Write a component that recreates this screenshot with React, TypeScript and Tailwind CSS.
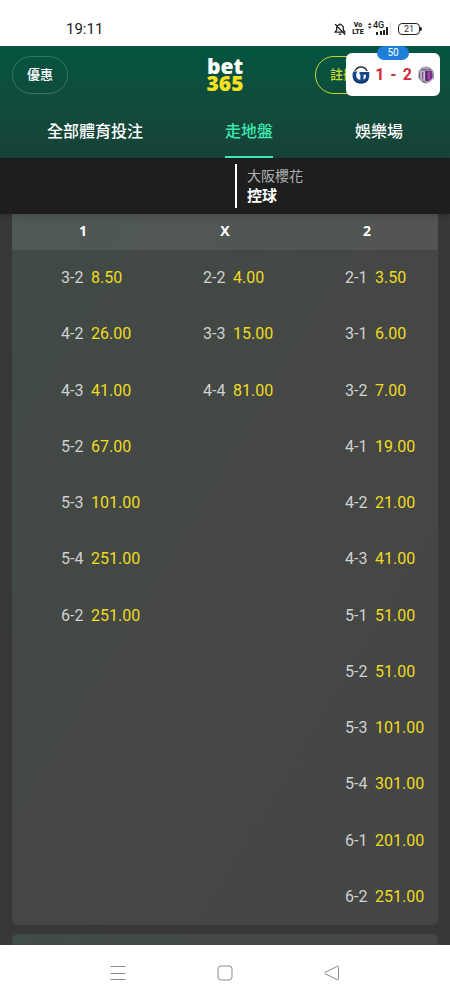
import React from 'react';

interface Selection {
  score: string;
  odds: string;
}

interface Column {
  title: string;
  selections: Selection[];
}

const columns: Column[] = [
  {
    title: '1',
    selections: [
      { score: '3-2', odds: '8.50' },
      { score: '4-2', odds: '26.00' },
      { score: '4-3', odds: '41.00' },
      { score: '5-2', odds: '67.00' },
      { score: '5-3', odds: '101.00' },
      { score: '5-4', odds: '251.00' },
      { score: '6-2', odds: '251.00' },
    ],
  },
  {
    title: 'X',
    selections: [
      { score: '2-2', odds: '4.00' },
      { score: '3-3', odds: '15.00' },
      { score: '4-4', odds: '81.00' },
    ],
  },
  {
    title: '2',
    selections: [
      { score: '2-1', odds: '3.50' },
      { score: '3-1', odds: '6.00' },
      { score: '3-2', odds: '7.00' },
      { score: '4-1', odds: '19.00' },
      { score: '4-2', odds: '21.00' },
      { score: '4-3', odds: '41.00' },
      { score: '5-1', odds: '51.00' },
      { score: '5-2', odds: '51.00' },
      { score: '5-3', odds: '101.00' },
      { score: '5-4', odds: '301.00' },
      { score: '6-1', odds: '201.00' },
      { score: '6-2', odds: '251.00' },
    ],
  },
];

const tabs = ['全部體育投注', '走地盤', '娛樂場'];

const BellOffIcon = () => (
  <svg className="w-3 h-3" viewBox="0 0 12 12" fill="none" stroke="#222" strokeWidth="1.3" strokeLinecap="round" strokeLinejoin="round">
    <path d="M1 9.200h10L9.400 7.200V5a3.400 3.400 0 0 0-6.800 0v2.200L1 9.200M6 1.500V.8M5.200 11.200h1.600M1.400 1.400l9.400 9.800" />
  </svg>
);

const BatteryIcon = () => (
  <div className="flex items-center">
    <div className="w-[22px] h-3 rounded border border-[#222] flex items-center justify-center text-[9px] leading-none text-[#333]">21</div>
    <div className="w-0.5 h-1 rounded-r bg-[#222]" />
  </div>
);

const StatusBar = () => (
  <div className="h-[46px] bg-white flex items-center justify-between pl-[66px] pr-7 pt-3 text-[#222]">
    <span className="text-[15px] leading-5">19:11</span>
    <div className="flex items-center">
      <BellOffIcon />
      {/* VoLTE */}
      <div className="ml-1.5 w-3 flex flex-col items-center text-[7px] leading-[7px] font-black">
        <span>Vo</span>
        <span>LTE</span>
      </div>
      {/* 4G signal */}
      <div className="relative ml-1 w-6 h-3.5">
        <svg className="w-6 h-3.5" viewBox="0 0 24 14" fill="#222">
          <path d="M0 3l1.800-2.200L3.600 3zM0 4.600h3.600L1.800 6.800z" />
          <rect x="8" y="10" width="2" height="3" />
          <rect x="12" y="9" width="2" height="4" />
          <rect x="15" y="8" width="2" height="5" />
          <rect x="18" y="5" width="2" height="8" />
          <rect x="22" y="0" width="1" height="13" fill="#ddd" />
        </svg>
        <span className="absolute left-[5px] -top-px text-[9px] leading-[9px] font-medium">4G</span>
      </div>
      <div className="ml-1.5">
        <BatteryIcon />
      </div>
    </div>
  </div>
);

const GambaCrest = () => (
  <svg className="w-[18px] h-[18px] shrink-0" viewBox="0 0 18 18" fill="none">
    <path d="M2.800 5C4.200 2.400 6.400 1 9 1s4.800 1.400 6.200 4" stroke="#2a2f3c" strokeWidth="1.400" />
    <path d="M1.200 5.500H5.500C4.600 6.600 4.200 7.800 4.200 9.200c0 2.800 1.700 4.600 4.200 4.600V8.500H7.500V6H17.300v3.500c0 4.700-3.400 8-8.300 8S.5 14 .5 9.500c0-1.500.2-2.800.7-4Z" fill="#17468a" />
    <path d="M11.500 8.800h2.400v1.500c0 1.600-.9 2.800-2.400 3.300Z" fill="#fff" />
    <path d="M2 13c1.500 2.700 3.900 4 7 4s5.500-1.300 7-4" stroke="#142c58" strokeWidth="1.200" />
  </svg>
);

const CerezoCrest = () => (
  <svg className="w-[18px] h-[18px] shrink-0" viewBox="0 0 18 18">
    <path d="M5 1.200 9 .3l4 .9L16.600 5v7.500L13 16l-4 1.700L5 16l-3.600-3.500V5Z" fill="#aaa3b5" />
    <path d="M4 5.500h5v9.800L4 12.800Z" fill="#c9bfd2" />
    <path d="M9 5h6v7.500l-4 3-2-1Z" fill="#7e2d8c" />
    <path d="M5.600 6v7.500" stroke="#8a3f96" strokeWidth="1.400" />
    <path d="M8.900 5v10" stroke="#43275d" strokeWidth="1.400" />
    <path d="M12 6v7" stroke="#b56cbe" strokeWidth="1" />
    <path d="M4 3.800h10M2.400 7v5M16 7v5M5 15.200l3.500 1.500" stroke="#625b74" strokeWidth="1" />
  </svg>
);

const ScoreWidget = () => (
  <div className="absolute right-2.5 top-[53px] w-[94px] h-[43px] rounded-md bg-white flex items-center justify-between pl-1.5 pr-[5px]">
    <span className="absolute -top-[7px] left-[31px] w-8 h-3.5 rounded-full bg-[#1e7fd9] text-white text-[10px] leading-[14px] text-center">50</span>
    <GambaCrest />
    <div className="flex gap-1.5 text-base font-bold text-[#d02c3e]">
      <span>1</span>
      <span>-</span>
      <span>2</span>
    </div>
    <CerezoCrest />
  </div>
);

const Header = () => (
  <header className="h-28 bg-linear-to-b from-[#025641] to-[#174137] flex flex-col justify-between">
    <div className="grid grid-cols-3 items-center px-3 h-[57px]">
      <button className="justify-self-start w-14 h-[38px] rounded-full border border-[#39765f] text-white text-[13px] font-medium">優惠</button>
      <a href="#" className="justify-self-center flex flex-col items-center font-['Open_Sans'] text-[21px] leading-[17px] font-extrabold text-white">
        <span>bet</span>
        <span className="text-[#fbe020]">365</span>
      </a>
      <button className="justify-self-end mr-[67px] w-14 h-[38px] rounded-full border border-[#c6d82e] text-[#c6d82e] text-[13px] font-medium">註冊</button>
    </div>
    <nav className="flex justify-between px-[47px]">
      {tabs.map((tab) => (
        <a
          key={tab}
          href="#"
          className={`h-[54px] border-b-2 pt-1 text-base leading-[48px] font-medium ${tab === '走地盤' ? 'text-[#3be8b0] border-[#3be8b0]' : 'text-white border-transparent'}`}
        >
          {tab}
        </a>
      ))}
    </nav>
  </header>
);

const TeamBar = () => (
  <div className="h-14 bg-[#1e1e1e] shadow-md relative flex items-center pl-[235px]">
    <div className="h-11 border-l-2 border-white pl-2.5 flex flex-col justify-center">
      <span className="text-sm leading-5 text-[#b0b0b0]">大阪櫻花</span>
      <span className="text-[15px] leading-5 font-bold text-white">控球</span>
    </div>
  </div>
);

const Market = () => (
  <section className="mx-3 grid grid-cols-3 rounded-b-md overflow-hidden bg-linear-to-br from-[#404a46] via-[#454745] to-[#444545]">
    {columns.map((column) => (
      <div key={column.title}>
        <h2 className="h-9 bg-white/8 text-center text-sm leading-[34px] font-bold font-['Open_Sans'] text-white">{column.title}</h2>
        <div className="grid grid-rows-12 h-[675px]">
          {column.selections.map((item) => (
            <button key={item.score} className="flex items-center pl-[49px] text-base">
              <span className="w-[30px] shrink-0 text-left text-[#d0d2d1]">{item.score}</span>
              <span className="text-[#efdc1e]">{item.odds}</span>
            </button>
          ))}
        </div>
      </div>
    ))}
  </section>
);

const NavigationBar = () => (
  <footer className="h-[55px] bg-white grid grid-cols-[1fr_107px_107px_107px_1fr] items-center justify-items-center text-[#8a8a8a]">
    <button aria-label="Menu" className="col-start-2">
      <svg className="w-4 h-4" viewBox="0 0 16 16" fill="none" stroke="currentColor">
        <path d="M.5 1.500h15M.5 8.500h15M.5 14.500h15" />
      </svg>
    </button>
    <button aria-label="Home">
      <svg className="w-4 h-4" viewBox="0 0 16 16" fill="none" stroke="currentColor">
        <rect x="1" y="1" width="14" height="14" rx="3" />
      </svg>
    </button>
    <button aria-label="Back">
      <svg className="w-4 h-4" viewBox="0 0 16 16" fill="none" stroke="currentColor" strokeLinejoin="round">
        <path d="M14.500 2.200v11.600c0 .8-.6 1.200-1.300.8L1.500 8.900c-.8-.4-.8-1.400 0-1.800l11.700-5.700c.7-.4 1.300 0 1.300.8Z" />
      </svg>
    </button>
  </footer>
);

export default function App() {
  return (
    <div className="relative bg-[#383838] font-[Roboto,'Noto_Sans_CJK_TC',sans-serif]">
      <StatusBar />
      <Header />
      <ScoreWidget />
      <TeamBar />
      <Market />
      {/* Top edge of the next market */}
      <div className="mx-3 mt-[9px] h-[11px] rounded-t-md bg-linear-to-r from-[#404c47] to-[#454645]" />
      <NavigationBar />
    </div>
  );
}
